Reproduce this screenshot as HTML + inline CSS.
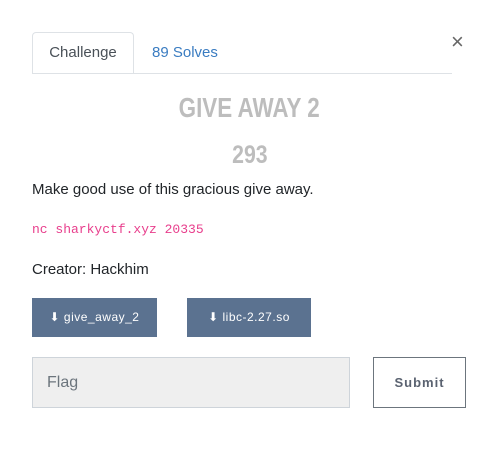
<!DOCTYPE html>
<html><head><style>
body{margin:0;width:499px;height:456px;background:#fff;font-family:"Liberation Sans",sans-serif;position:relative;overflow:hidden}
.a{position:absolute}
.tab{left:32px;top:32px;width:102px;height:41px;border:1px solid #dee2e6;border-bottom:none;border-radius:4px 4px 0 0;background:#fff;box-sizing:border-box;text-align:center;line-height:40px;font-size:15px;color:#495057}
.line{left:32px;top:73px;width:420px;height:1px;background:#dee2e6}
.title{left:0;width:499px;text-align:center;color:#bdbdbd;font-weight:bold}
.title span{display:inline-block}
.btn{background:#5b7290;color:#fff;height:39px;line-height:39px;font-size:12px;letter-spacing:0.5px;text-align:center}
</style></head><body>
<div class="a tab">Challenge</div>
<div class="a" style="left:152px;top:33px;line-height:40px;font-size:15px;color:#3a7cc1">89 Solves</div>
<div class="a line"></div>
<div class="a" style="left:451px;top:29px;font-size:22px;color:#666">×</div>
<div class="a title" style="top:92px;font-size:28px;"><span style="transform:scaleX(0.8)">GIVE AWAY 2</span></div>
<div class="a title" style="top:141px;font-size:25px"><span style="transform:scaleX(0.85)">293</span></div>
<div class="a" style="left:32px;top:181px;font-size:15px;color:#212529">Make good use of this gracious give away.</div>
<div class="a" style="left:32px;top:222px;font-size:13px;color:#e83e8c;font-family:'Liberation Mono',monospace">nc sharkyctf.xyz 20335</div>
<div class="a" style="left:32px;top:261px;font-size:15px;color:#212529">Creator: Hackhim</div>
<div class="a btn" style="left:32px;top:298px;width:125px">⬇ give_away_2</div>
<div class="a btn" style="left:187px;top:298px;width:124px">⬇ libc-2.27.so</div>
<div class="a" style="left:32px;top:357px;width:318px;height:51px;box-sizing:border-box;border:1px solid #ced4da;background:#efefef;font-size:16px;color:#6c757d;line-height:49px;padding-left:14px">Flag</div>
<div class="a" style="left:373px;top:357px;width:93px;height:51px;box-sizing:border-box;border:1px solid #6c757d;text-align:center;line-height:49px;font-size:13px;font-weight:bold;color:#5a6270;letter-spacing:1px">Submit</div>
</body></html>
